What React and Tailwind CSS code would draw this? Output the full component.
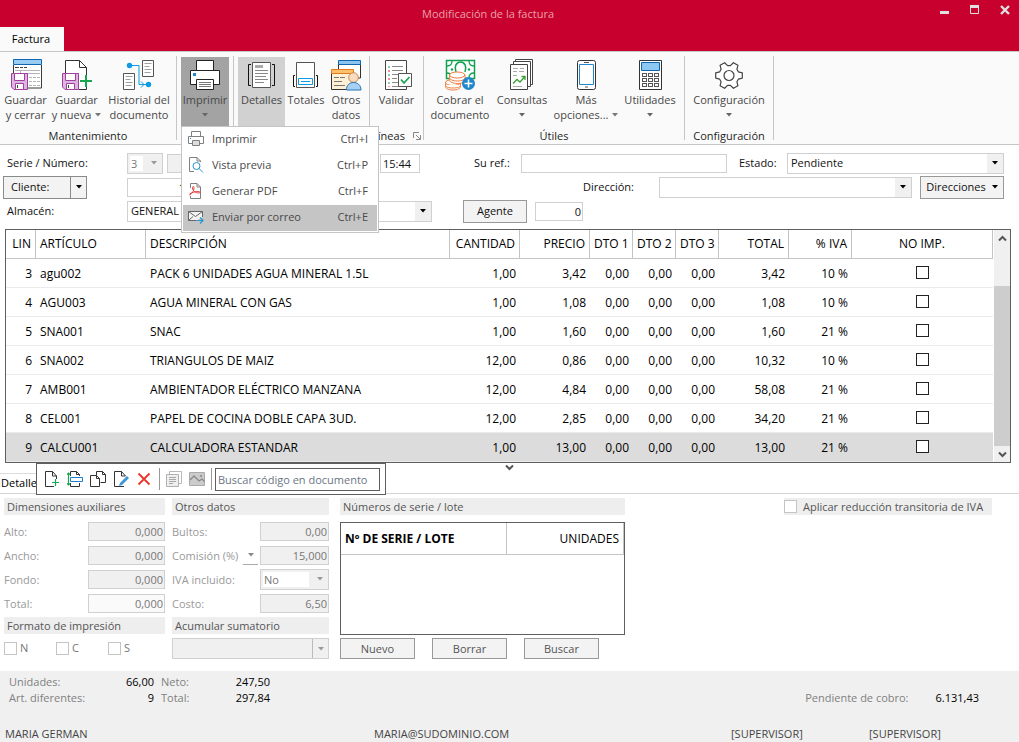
import clsx from "clsx";

/* ---------- small drawings ---------- */

function Caret({ className = "text-black" }) {
  return (
    <svg width="6" height="4" viewBox="0 0 6 4" className={clsx("shrink-0", className)} aria-hidden="true">
      <path d="M0 0h6L3 3.6z" fill="currentColor" />
    </svg>
  );
}

function Chevron({ up }) {
  return (
    <svg width="9" height="7" viewBox="0 0 9 7" aria-hidden="true">
      <path d={up ? "M1 5.5l3.5-3.5L8 5.5" : "M1 1.5l3.5 3.5L8 1.5"} fill="none" stroke="#555" strokeWidth="2" />
    </svg>
  );
}

function Svg({ children, size = 32 }) {
  return (
    <svg width={size} height={size} viewBox={`0 0 ${size} ${size}`} fill="none" className="block shrink-0" aria-hidden="true">
      {children}
    </svg>
  );
}

function Floppy() {
  return (
    <g stroke="#a0409f">
      <path d="M1.5 14.5h16v16H4l-2.500-2.500z" fill="#dcb6e0" />
      <path d="M4.500 14.500h10v7h-10z" fill="#fff" />
      <path d="M5.500 24.500h8v6h-8z" fill="#fff" />
      <path d="M7.500 26v3" stroke="#444" />
    </g>
  );
}

const SaveCloseIcon = () => (
  <Svg>
    <path d="M3.500 6v23h28V6" fill="#fff" stroke="#3b3b3b" />
    <path d="M3.500.500h28v5h-28z" fill="#9acbf0" stroke="#0f66b0" />
    <path d="M5 8.500h4M10 8.500h3M14 8.500h3" stroke="#444" />
    <path d="M5 11.500h25M10.500 12v3M11 14.500h19" stroke="#b5b5b5" />
    <path d="M19 18.500h3M23 18.500h3M27 18.500h3M19 22.500h3M23 22.500h3M27 22.500h3M19 26.500h3M23 26.500h3M27 26.500h3" stroke="#b5b5b5" />
    <Floppy />
  </Svg>
);

const SaveNewIcon = () => (
  <Svg>
    <path d="M4.500 14V1.500h14l7 7v21h-8" fill="#fff" />
    <path d="M4.500 14V1.500h14l7 7v9M25.500 27v3.500h-8" stroke="#333" />
    <path d="M18.500 1.500v7h7" stroke="#333" />
    <Floppy />
    <path d="M19 22h12M25 16v12" stroke="#19a653" strokeWidth="2" />
  </Svg>
);

const HistoryIcon = () => (
  <Svg>
    <path d="M19.500 1.500h11v16h-11z" fill="#fff" stroke="#555" />
    <path d="M21.500 4.500h7M21.500 7.500h5M21.500 10.500h7M21.500 13.500h6" stroke="#a0a0a0" />
    <path d="M.500 14.500h11v16H.500z" fill="#fff" stroke="#555" />
    <path d="M2.500 17.500h7M2.500 20.500h5M2.500 23.500h7M2.500 26.500h6" stroke="#a0a0a0" />
    <path d="M7 6.500h9v19h8" stroke="#0c9be4" />
    <path d="M18 22.500l3 3-3 3" stroke="#0c9be4" />
    <circle cx="6.500" cy="6.500" r="2.700" fill="#0c9be4" />
    <circle cx="25.500" cy="25.500" r="2.700" fill="#0c9be4" />
  </Svg>
);

const PrinterIcon = () => (
  <Svg>
    <path d="M7.500 11V1.500h17V11" fill="#fff" stroke="#222" />
    <path d="M1.500 11.500h29v14h-29z" fill="#fff" stroke="#222" />
    <path d="M4 14h3v3H4z" fill="#2187cc" />
    <path d="M7.500 20.500h17v10h-17z" fill="#fff" stroke="#222" />
    <path d="M10 23.500h12M10 25.500h12M10 27.500h12" stroke="#777" />
  </Svg>
);

const DetailIcon = () => (
  <Svg>
    <path d="M6.500 3.500h18v25h-18z" fill="#fff" stroke="#555" />
    <path d="M5 5.500H2.500v21H5M26 5.500h2.500v21H26" stroke="#111" />
    <path d="M9 6h8v3H9z" fill="#aaa" />
    <path d="M9 11.500h13M9 14.500h13M9 17.500h11M9 20.500h13M9 23.500h9" stroke="#888" />
  </Svg>
);

const TotalsIcon = () => (
  <Svg>
    <path d="M6.500 3.500h18v25h-18z" fill="#fff" stroke="#555" />
    <path d="M5 16.500H3.500v11H5M26 16.500h1.500v11H26" stroke="#111" />
    <path d="M8.500 19.500h14v6h-14z" fill="#fff" stroke="#0c9be4" />
    <path d="M11 22.500h9" stroke="#0c9be4" />
  </Svg>
);

const OtherDataIcon = () => (
  <Svg>
    <path d="M8.500 5v14h22V5" fill="#fff" stroke="#333" />
    <path d="M8.500 1.500h22v4h-22z" fill="#8cc4ee" stroke="#0f66b0" />
    <path d="M1.500 14v16.500h21V14" fill="#fdf0d4" stroke="#333" />
    <path d="M1.500 10.500h22v4h-22z" fill="#fbc26b" stroke="#e07a1d" />
    <path d="M4 18.500h5M10 18.500h5M4 22.500h8M4 26.500h11" stroke="#777" />
    <circle cx="23.500" cy="18.500" r="4.800" fill="#f9dcc0" stroke="#c98753" />
    <path d="M16.500 31c0-5 3-7.500 7-7.500s7.500 2.500 7.500 7.500z" fill="#a8d0f2" stroke="#2474b8" />
  </Svg>
);

const ValidateIcon = () => (
  <Svg>
    <path d="M4.500 1.500h21v29h-21z" fill="#fff" stroke="#444" />
    <path d="M11 7.500h11M11 11.500h11M11 15.500h7M11 19.500h5M11 23.500h6M11 27.500h11" stroke="#888" />
    <path d="M8 7v2M8 15v2M8 23v2" stroke="#19a653" />
    <path d="M8 11v2M8 19v2M8 27v1" stroke="#d22" />
    <path d="M17.500 14.500h13v13h-13z" fill="#fff" stroke="#555" />
    <path d="M20 20.500l3 3.500 5.500-6" stroke="#19a653" strokeWidth="1.800" />
  </Svg>
);

const CashIcon = () => (
  <Svg>
    <path d="M2.500 1.500h28v18h-28z" fill="#fff" stroke="#12a150" strokeWidth="1.500" />
    <path d="M3 7c3 0 5-2 5-5M30 7c-3 0-5-2-5-5M30 14c-3 0-5 2-5 5M3 14c2 0 4 1 5 3" stroke="#12a150" strokeWidth="1.300" />
    <path d="M12 13c-2-5 0-10 4.500-10S23 8 21 13" stroke="#12a150" strokeWidth="1.500" />
    <circle cx="8" cy="10.500" r="1.200" fill="#12a150" />
    <circle cx="25" cy="10.500" r="1.200" fill="#12a150" />
    <g fill="#fff" stroke="#ee7d3c">
      <path d="M1.500 23.500v4c0 2 3 3.500 7.500 3.500s7.500-1.500 7.500-3.500v-4z" />
      <ellipse cx="9" cy="23.500" rx="7.500" ry="3" />
      <path d="M1.500 26c0 2 3 3 7.500 3s7.500-1 7.500-3" />
      <path d="M5.500 16v5c0 2 3.500 3.500 8 3.500s7.500-1.500 7.500-3.500v-5z" />
      <path d="M5.500 18.500c0 2 3.500 3.500 8 3.500s7.500-1.500 7.500-3.500" />
      <ellipse cx="13.200" cy="16" rx="7.700" ry="3" />
    </g>
    <circle cx="24.500" cy="24.500" r="6.500" fill="#2187cc" />
    <path d="M20.500 24.500h8M24.500 20.500v8" stroke="#fff" strokeWidth="1.500" />
  </Svg>
);

const QueriesIcon = () => (
  <Svg>
    <path d="M9.500.500h17v25h-17z" fill="#fff" stroke="#444" />
    <path d="M7.500 2.500h17v25h-17z" fill="#fff" stroke="#444" />
    <path d="M4.500 5.500h17v25h-17z" fill="#fff" stroke="#444" />
    <path d="M7 9.500h5M14 9.500h4M7 12.500h4M13 12.500h5M7 16.500h4M7 27.500h9" stroke="#aaa" />
    <path d="M7 24.500l4-4 3 2.500 4.500-5M15.500 17.500h3.500v3.500" stroke="#3aa335" strokeWidth="1.300" />
  </Svg>
);

const PhoneIcon = () => (
  <Svg>
    <rect x="7.500" y="1.500" width="18" height="29" rx="2" fill="#fff" stroke="#333" />
    <path d="M9.500 5.500h14v20h-14z" fill="#fff" stroke="#2187cc" />
    <path d="M14 3.500h5M15 28h3" stroke="#555" />
  </Svg>
);

const CalculatorIcon = () => (
  <Svg>
    <path d="M5.500 1.500h22v29h-22z" fill="#fff" stroke="#333" />
    <path d="M7.500 3.500h18v8h-18z" fill="#8cc8f2" stroke="#0f66b0" />
    {[14.5, 19.5, 24.5].map((y) =>
      [8.5, 14.5, 20.5].map((x) => (
        <rect key={`${x}-${y}`} x={x} y={y} width="4" height="3" fill="#fff" stroke="#555" />
      ))
    )}
  </Svg>
);

// six teeth, four corners each
const gearPoints = [0, 60, 120, 180, 240, 300]
  .flatMap((a) => [
    [a - 22, 10],
    [a - 11, 13.5],
    [a + 11, 13.5],
    [a + 22, 10],
  ])
  .map(([a, r]) => {
    const rad = (a * Math.PI) / 180;
    return `${(16 + r * Math.cos(rad)).toFixed(1)},${(16.5 + r * Math.sin(rad)).toFixed(1)}`;
  })
  .join(" ");

const GearIcon = () => (
  <Svg>
    <polygon points={gearPoints} fill="#fff" stroke="#444" strokeWidth="1.200" strokeLinejoin="round" />
    <circle cx="16" cy="16.500" r="5" fill="#fff" stroke="#444" strokeWidth="1.200" />
  </Svg>
);

const MenuPrintIcon = () => (
  <Svg size={16}>
    <path d="M3.500 5V.500h9V5M.500 5.500h15v7H.500z" fill="#fff" stroke="#808080" />
    <path d="M4.500 9.500h7v5h-7z" fill="#ddd" stroke="#808080" />
    <path d="M2 7h1v1H2z" fill="#2187cc" />
  </Svg>
);

const MenuPreviewIcon = () => (
  <Svg size={16}>
    <path d="M9 .500H1.500v14H6M9 .500L12.500 4v1M9 .500V4h3.500" stroke="#808080" />
    <circle cx="8.500" cy="9" r="3.500" fill="#fff" stroke="#2b93d1" />
    <path d="M11 11.500l4 4" stroke="#2b93d1" />
  </Svg>
);

const MenuPdfIcon = () => (
  <Svg size={16}>
    <path d="M2.500 5V.500H9L12.500 4v11.500h-10V13M9 .500V4h3.500" stroke="#808080" />
    <path d="M1.500 12C3 12 6 8 6 5c0-2-1.500-2-1.500 0 0 2.500 3 5 6.500 5 1.500 0 1.500-1.500-.500-1.500C7.500 8.500 3.500 9.500 1.500 11" stroke="#e03c3c" />
  </Svg>
);

const MenuMailIcon = () => (
  <Svg size={16}>
    <path d="M14.500 8V2.500H.500v9h8" fill="#f4f4f4" stroke="#666" />
    <path d="M.500 2.500l7 5 7-5M.500 11.500L5 7.500" stroke="#666" />
    <path d="M8.500 11.500h6M12 8.500l3 3-3 3" stroke="#2b93d1" strokeWidth="1.200" />
  </Svg>
);

const NewLineIcon = () => (
  <Svg size={16}>
    <path d="M10 15.500H1.500V.500h7L12.500 5v3M8.500.500V5h4" stroke="#333" />
    <path d="M8 11.500h7M11.500 8v7" stroke="#19a653" strokeWidth="1.200" />
  </Svg>
);

const InsertLineIcon = () => (
  <Svg size={16}>
    <path d="M3.500 5V.500h6l3 3V5M3.500 12v3.500h9V12M9.500.500v3h3" stroke="#333" />
    <path d="M3.500 6.500h12v4h-12z" fill="#fff" stroke="#1d7fd1" />
    <path d="M1.500 2v12M0 3.500L1.500 2 3 3.500M0 12.500L1.500 14 3 12.500" stroke="#19a653" strokeWidth="1.200" />
  </Svg>
);

const CopyIcon = () => (
  <Svg size={16}>
    <path d="M6.500 4V.500h6l3 3v8h-5M12.500.500v3h3" stroke="#333" />
    <path d="M.500 4.500h6l3 3v8h-9zM6.500 4.500v3h3" fill="#fff" stroke="#333" />
  </Svg>
);

const EditIcon = () => (
  <Svg size={16}>
    <path d="M11 15.500H1.500V.500h7L12.500 5M8.500.500V5h4" stroke="#333" />
    <path d="M6 15l1-3 7-7 2 2-7 7z" fill="#3d96d8" />
  </Svg>
);

const DeleteIcon = () => (
  <Svg size={16}>
    <path d="M2.500 2.500l11 11M13.500 2.500l-11 11" stroke="#e93c31" strokeWidth="2" />
  </Svg>
);

const NotesIcon = () => (
  <Svg size={16}>
    <path d="M3.500 3V.500h12v12H13" stroke="#b8b8b8" />
    <path d="M.500 3.500h12v12H.500z" fill="#eee" stroke="#b0b0b0" />
    <path d="M3 6.500h7M3 8.500h7M3 10.500h7M3 12.500h4" stroke="#a8a8a8" />
  </Svg>
);

const PictureIcon = () => (
  <Svg size={16}>
    <path d="M.500 1.500h15v13H.500z" fill="#ccc" stroke="#aaa" />
    <path d="M1 9l4-4 5 5 3-2 2.500 2.500" stroke="#888" strokeWidth="1.300" />
    <circle cx="12" cy="5" r="1.300" fill="#999" />
  </Svg>
);

/* ---------- ribbon ---------- */

function RibbonButton({ icon, lines, className, caret, inlineCaret }) {
  return (
    <button type="button" className={clsx("flex h-[69px] flex-col items-center pt-[2px] leading-[15px] text-[#484848]", className)}>
      <span className="mb-px">{icon}</span>
      <span className="whitespace-nowrap">{lines[0]}</span>
      {lines[1] && (
        <span className="flex items-center gap-1 whitespace-nowrap">
          {lines[1]}
          {inlineCaret && <Caret className="text-[#777]" />}
        </span>
      )}
      {caret && (
        <span className="flex h-[15px] items-center">
          <Caret className="text-[#666]" />
        </span>
      )}
    </button>
  );
}

function RibbonGroup({ label, children, className, launcher }) {
  return (
    <section className={clsx("my-1 flex flex-col border-r border-[#c6c6c6] pt-px", className)}>
      <div className="flex justify-center">{children}</div>
      <div className="flex h-4 items-center justify-center gap-2 pt-1 text-[#1f1f1f]">
        {label}
        {launcher && (
          <svg width="8" height="8" viewBox="0 0 8 8" fill="none" stroke="#888" aria-hidden="true">
            <path d="M.500 6V.500H6M3 3l4 4M7.500 3v4.500H3" />
          </svg>
        )}
      </div>
    </section>
  );
}

const printMenu = [
  { label: "Imprimir", keys: "Ctrl+I", icon: <MenuPrintIcon /> },
  { label: "Vista previa", keys: "Ctrl+P", icon: <MenuPreviewIcon /> },
  { label: "Generar PDF", keys: "Ctrl+F", icon: <MenuPdfIcon /> },
  { label: "Enviar por correo", keys: "Ctrl+E", icon: <MenuMailIcon />, active: true },
];

function PrintMenu() {
  return (
    <div role="menu" className="absolute top-full left-0 z-10 w-[198px] border border-[#c4c4c4] bg-white p-px pt-0 text-[#4a4a4a]">
      {printMenu.map((item) => (
        <button
          key={item.label}
          type="button"
          role="menuitem"
          className={clsx("flex h-[26px] w-full items-center gap-2 pr-[9px] pb-[2px] pl-[5px]", item.active && "bg-[#c5c5c5]")}
        >
          {item.icon}
          <span>{item.label}</span>
          <span className="ml-auto">{item.keys}</span>
        </button>
      ))}
    </div>
  );
}

function Ribbon() {
  return (
    <div className="flex h-[94px] border-y border-[#c6c6c6] bg-[#fafafa]">
      <RibbonGroup label="Mantenimiento" className="w-[177px]">
        <RibbonButton icon={<SaveCloseIcon />} lines={["Guardar", "y cerrar"]} className="w-[51px]" />
        <RibbonButton icon={<SaveNewIcon />} lines={["Guardar", "y nueva"]} className="w-[51px]" inlineCaret />
        <RibbonButton icon={<HistoryIcon />} lines={["Historial del", "documento"]} className="w-[74px]" />
      </RibbonGroup>
      <RibbonGroup className="w-[57px]">
        <div className="relative">
          <RibbonButton icon={<PrinterIcon />} lines={["Imprimir"]} className="w-[48px] bg-[#a3a3a3]" caret />
          <PrintMenu />
        </div>
      </RibbonGroup>
      <RibbonGroup className="w-[136px]">
        <RibbonButton icon={<DetailIcon />} lines={["Detalles"]} className="w-[47px] bg-[#d1d1d1]" />
        <RibbonButton icon={<TotalsIcon />} lines={["Totales"]} className="w-[42px]" />
        <RibbonButton icon={<OtherDataIcon />} lines={["Otros", "datos"]} className="w-[38px]" />
      </RibbonGroup>
      <RibbonGroup label="Líneas" className="w-[54px]" launcher>
        <RibbonButton icon={<ValidateIcon />} lines={["Validar"]} className="w-[48px]" />
      </RibbonGroup>
      <RibbonGroup label="Útiles" className="w-[261px]">
        <RibbonButton icon={<CashIcon />} lines={["Cobrar el", "documento"]} className="w-[64px]" />
        <RibbonButton icon={<QueriesIcon />} lines={["Consultas"]} className="w-[60px]" caret />
        <RibbonButton icon={<PhoneIcon />} lines={["Más", "opciones..."]} className="w-[68px]" inlineCaret />
        <RibbonButton icon={<CalculatorIcon />} lines={["Utilidades"]} className="w-[60px]" caret />
      </RibbonGroup>
      <RibbonGroup label="Configuración" className="w-[89px]">
        <RibbonButton icon={<GearIcon />} lines={["Configuración"]} className="w-[80px]" caret />
      </RibbonGroup>
    </div>
  );
}

/* ---------- header form ---------- */

function SelectBox({ id, label, value, className, disabled, buttonClass }) {
  return (
    <div className={clsx("relative flex h-[21px] items-center border border-[#d0d0d0]", disabled ? "bg-[#f0f0f0] text-[#777]" : "bg-white", className)}>
      <select
        id={id}
        aria-label={label}
        disabled={disabled}
        className={clsx(
          "block appearance-none outline-none",
          disabled && value ? "ml-[2px] mr-[19px] h-[15px] min-w-0 flex-1 bg-white pl-px" : "h-full w-full pl-[3px]"
        )}
      >
        <option>{value}</option>
      </select>
      <span
        className={clsx(
          "pointer-events-none absolute inset-y-0 right-0 flex w-4 items-center justify-center",
          buttonClass || "bg-[#f0f0f0]"
        )}
      >
        <Caret className={disabled ? "text-[#999]" : "text-black"} />
      </span>
    </div>
  );
}

const fieldClass = "h-[19px] border border-[#d0d0d0] outline-none";

function HeaderForm() {
  return (
    <div className="pt-[6px] pr-[15px] pb-[6px] text-[#111]">
      <div className="flex h-6 items-center pl-[7px]">
        <label htmlFor="serie" className="w-[120px]">Serie / Número:</label>
        <SelectBox id="serie" value="3" disabled className="w-[36px]" />
        <input aria-label="Número" className={clsx(fieldClass, "ml-1 w-[210px] bg-[#f0f0f0] px-[3px]")} />
        <input aria-label="Hora" defaultValue="15:44" className={clsx(fieldClass, "ml-[3px] w-[40px] pl-[2px]")} />
        <label htmlFor="ref" className="ml-[54px] w-[47px]">Su ref.:</label>
        <input id="ref" className={clsx(fieldClass, "w-[206px] px-[3px]")} />
        <label htmlFor="estado" className="ml-3 w-[48px]">Estado:</label>
        <SelectBox id="estado" value="Pendiente" className="flex-1" />
      </div>
      <div className="flex h-6 items-center pl-[3px]">
        <div className="flex h-[23px] w-[84px] border border-[#8a8a8a] bg-[#f3f3f3]">
          <button type="button" className="flex-1 pl-[7px] text-left">Cliente:</button>
          <button type="button" aria-label="Opciones de cliente" className="flex w-4 items-center justify-center border-l border-[#8a8a8a]">
            <Caret />
          </button>
        </div>
        <input aria-label="Cliente" defaultValue="1" className={clsx(fieldClass, "ml-10 w-[60px] pr-px text-right")} />
        <label htmlFor="direccion" className="ml-[396px] w-[76px]">Dirección:</label>
        <SelectBox id="direccion" value="" className="flex-1" />
        <button type="button" className="ml-2 flex h-[23px] w-[84px] items-center justify-center gap-[6px] border border-[#999] bg-[#f3f3f3]">
          Direcciones
          <Caret />
        </button>
      </div>
      <div className="flex h-6 items-center pl-[7px]">
        <label htmlFor="almacen" className="w-[120px]">Almacén:</label>
        <SelectBox id="almacen" value="GENERAL" className="w-[305px]" />
        <button type="button" className="ml-[31px] h-[23px] w-[64px] border border-[#999] bg-[#f3f3f3]">Agente</button>
        <input aria-label="Agente" defaultValue="0" className={clsx(fieldClass, "ml-2 w-[48px] px-px text-right")} />
      </div>
    </div>
  );
}

/* ---------- invoice lines ---------- */

const columns = [
  { name: "LIN", width: "w-[30px]", align: "text-right" },
  { name: "ARTÍCULO", width: "w-[110px]", align: "text-left" },
  { name: "DESCRIPCIÓN", width: "w-[304px]", align: "text-left" },
  { name: "CANTIDAD", width: "w-[70px]", align: "text-right" },
  { name: "PRECIO", width: "w-[70px]", align: "text-right" },
  { name: "DTO 1", width: "w-[43px]", align: "text-right" },
  { name: "DTO 2", width: "w-[43px]", align: "text-right" },
  { name: "DTO 3", width: "w-[43px]", align: "text-right" },
  { name: "TOTAL", width: "w-[70px]", align: "text-right" },
  { name: "% IVA", width: "w-[63px]", align: "text-right" },
  { name: "NO IMP.", width: "", align: "text-center" },
];

const lines = [
  ["3", "agu002", "PACK 6 UNIDADES AGUA MINERAL 1.5L", "1,00", "3,42", "0,00", "0,00", "0,00", "3,42", "10 %"],
  ["4", "AGU003", "AGUA MINERAL CON GAS", "1,00", "1,08", "0,00", "0,00", "0,00", "1,08", "10 %"],
  ["5", "SNA001", "SNAC", "1,00", "1,60", "0,00", "0,00", "0,00", "1,60", "21 %"],
  ["6", "SNA002", "TRIANGULOS DE MAIZ", "12,00", "0,86", "0,00", "0,00", "0,00", "10,32", "10 %"],
  ["7", "AMB001", "AMBIENTADOR ELÉCTRICO MANZANA", "12,00", "4,84", "0,00", "0,00", "0,00", "58,08", "21 %"],
  ["8", "CEL001", "PAPEL DE COCINA DOBLE CAPA 3UD.", "12,00", "2,85", "0,00", "0,00", "0,00", "34,20", "21 %"],
  ["9", "CALCU001", "CALCULADORA ESTANDAR", "1,00", "13,00", "0,00", "0,00", "0,00", "13,00", "21 %"],
];

function LinesTable() {
  return (
    <div className="mr-2 ml-[5px] flex border border-[#5f5f5f] bg-white">
      <div className="min-w-0 flex-1 pr-px">
        <table className="w-full table-fixed border-separate border-spacing-0 text-[12px] leading-4 text-black">
          <thead>
            <tr>
              {columns.map((c) => (
                <th
                  key={c.name}
                  scope="col"
                  className={clsx("h-[29px] border-r border-b border-[#c4c4c4] px-1 font-normal whitespace-nowrap", c.width, c.align)}
                >
                  {c.name}
                </th>
              ))}
            </tr>
          </thead>
          <tbody>
            {lines.map((row) => (
              <tr key={row[0]} className={row[0] === "9" ? "bg-[#dcdcdc]" : "bg-white"}>
                {row.map((cell, i) => (
                  <td
                    key={columns[i].name}
                    className={clsx("h-[29px] border-b border-[#ebebeb] px-1 pt-[2px] whitespace-nowrap", columns[i].align)}
                  >
                    {cell}
                  </td>
                ))}
                <td className="h-[29px] border-b border-[#ebebeb] px-1 pb-[2px]">
                  <input
                    type="checkbox"
                    aria-label={`No imprimir línea ${row[0]}`}
                    className="mx-auto block size-[13px] appearance-none border border-[#222] bg-white"
                  />
                </td>
              </tr>
            ))}
          </tbody>
        </table>
      </div>
      <div className="flex w-4 flex-col items-center bg-[#f0f0f0]">
        <div className="flex h-4 items-center"><Chevron up /></div>
        <div className="mt-10 w-full flex-1 bg-[#cdcdcd]" />
        <div className="flex h-4 items-center"><Chevron /></div>
      </div>
    </div>
  );
}

/* ---------- detail area ---------- */

const lineTools = [
  { name: "Nueva línea", icon: <NewLineIcon /> },
  { name: "Insertar línea", icon: <InsertLineIcon /> },
  { name: "Duplicar línea", icon: <CopyIcon /> },
  { name: "Modificar línea", icon: <EditIcon /> },
  { name: "Eliminar línea", icon: <DeleteIcon /> },
];

function LineToolbar() {
  return (
    <div className="relative flex h-[31px] border-b border-[#d4d4d4]">
      <div className="mt-[10px] w-9 overflow-hidden border-t border-[#dcdcdc] pt-px pl-px whitespace-nowrap text-black">Detalle</div>
      <div className="flex h-8 w-[350px] items-center border border-[#5f5f5f] bg-white pl-[7px]">
        <div className="flex gap-[7px]">
          {lineTools.map((t) => (
            <button key={t.name} type="button" aria-label={t.name}>{t.icon}</button>
          ))}
        </div>
        <div className="ml-[7px] flex h-[22px] items-center gap-[7px] border-x border-[#999] px-[6px]">
          <button type="button" aria-label="Notas" disabled><NotesIcon /></button>
          <button type="button" aria-label="Imagen" disabled><PictureIcon /></button>
        </div>
        <input
          aria-label="Buscar código en documento"
          placeholder="Buscar código en documento"
          className="mr-[5px] ml-[3px] h-[23px] min-w-0 flex-1 border border-[#5f5f5f] px-[2px] outline-none placeholder:text-[#6b7684]"
        />
      </div>
      <span className="absolute inset-x-0 top-px mx-auto flex w-[9px]"><Chevron /></span>
    </div>
  );
}

function Heading({ children }) {
  return <h2 className="h-[17px] bg-[#eee] pl-[3px] leading-[17px] text-[#555]">{children}</h2>;
}

function Field({ id, label, value, inputClass, children }) {
  return (
    <div className="flex h-6 items-center">
      <label htmlFor={id} className="flex-1 pt-[2px] whitespace-nowrap text-[#999]">{label}</label>
      {children || (
        <input id={id} defaultValue={value} readOnly className={clsx(fieldClass, "px-px text-right text-[#777]", inputClass)} />
      )}
    </div>
  );
}

function DetailPanel() {
  return (
    <div className="flex flex-1 items-start pt-1 pr-[27px] pb-[9px] pl-1">
      <div className="w-[161px]">
        <Heading>Dimensiones auxiliares</Heading>
        <div className="pt-1 pb-[2px]">
          <Field id="alto" label="Alto:" value="0,000" inputClass="w-[77px] bg-[#f0f0f0]" />
          <Field id="ancho" label="Ancho:" value="0,000" inputClass="w-[77px] bg-[#f0f0f0]" />
          <Field id="fondo" label="Fondo:" value="0,000" inputClass="w-[77px] bg-[#f0f0f0]" />
          <Field id="total" label="Total:" value="0,000" inputClass="w-[77px] bg-[#fafafa]" />
        </div>
        <Heading>Formato de impresión</Heading>
        <div className="flex h-7 items-center">
          {["N", "C", "S"].map((f) => (
            <label key={f} className="flex w-[52px] items-center gap-[3px] text-[#777]">
              <input type="checkbox" className="size-[13px] appearance-none border border-[#c4c4c4] bg-white" />
              {f}
            </label>
          ))}
        </div>
      </div>

      <div className="ml-[7px] w-[157px]">
        <Heading>Otros datos</Heading>
        <div className="pt-1 pb-[2px]">
          <Field id="bultos" label="Bultos:" value="0,00" inputClass="w-[69px] bg-[#f0f0f0]" />
          <Field id="comision" label="Comisión (%)">
            <button type="button" aria-label="Tipo de comisión" className="mr-[2px] flex h-[19px] w-[15px] items-center justify-center border-b border-[#aaa]">
              <Caret className="text-[#888]" />
            </button>
            <input id="comision" defaultValue="15,000" readOnly className={clsx(fieldClass, "w-[69px] bg-[#f0f0f0] px-px text-right text-[#777]")} />
          </Field>
          <Field id="iva" label="IVA incluido:">
            <SelectBox id="iva" value="No" disabled className="w-[69px]" />
          </Field>
          <Field id="costo" label="Costo:" value="6,50" inputClass="w-[69px] bg-[#f0f0f0]" />
        </div>
        <Heading>Acumular sumatorio</Heading>
        <SelectBox label="Acumular sumatorio" value="" disabled className="mt-1" buttonClass="border-l border-[#bbb]" />
      </div>

      <div className="ml-[11px] w-[285px]">
        <Heading>Números de serie / lote</Heading>
        <div className="mt-[7px] h-[113px] border border-[#5f5f5f] bg-white">
          <table className="w-full border-separate border-spacing-0 text-[12px] text-black">
            <thead>
              <tr>
                <th scope="col" className="h-8 w-[166px] border-r border-b border-[#c4c4c4] px-1 text-left font-bold">Nº DE SERIE / LOTE</th>
                <th scope="col" className="h-8 border-r border-b border-[#c4c4c4] px-1 text-right font-normal">UNIDADES</th>
              </tr>
            </thead>
          </table>
        </div>
        <div className="mt-[3px] flex gap-[17px]">
          {["Nuevo", "Borrar", "Buscar"].map((b) => (
            <button key={b} type="button" className="h-[21px] w-[75px] border border-[#999] bg-[#f3f3f3] text-[#555]">{b}</button>
          ))}
        </div>
      </div>

      <label className="ml-auto flex h-[17px] w-[208px] items-center gap-[6px] bg-[#eee] text-[#555]">
        <input type="checkbox" className="size-[13px] appearance-none border border-[#c4c4c4] bg-white" />
        Aplicar reducción transitoria de IVA
      </label>
    </div>
  );
}

/* ---------- footer ---------- */

function Footer() {
  return (
    <footer className="bg-[#f0f0f0] pt-[3px] text-[#808080]">
      <div className="flex items-end pr-10 pl-[9px] leading-4">
        <dl className="grid grid-cols-[85px_60px_60px_56px]">
          <dt>Unidades:</dt>
          <dd className="text-right text-black">66,00</dd>
          <dt className="pl-[7px]">Neto:</dt>
          <dd className="text-right text-black">247,50</dd>
          <dt className="whitespace-nowrap">Art. diferentes:</dt>
          <dd className="text-right text-black">9</dd>
          <dt className="pl-[7px]">Total:</dt>
          <dd className="text-right text-black">297,84</dd>
        </dl>
        <p className="ml-auto flex gap-[27px]">
          Pendiente de cobro: <span className="text-black">6.131,43</span>
        </p>
      </div>
      <div className="mt-5 flex h-4 items-center pl-[5px] text-[#444]">
        <span className="w-[369px]">MARIA GERMAN</span>
        <span className="flex-1">MARIA@SUDOMINIO.COM</span>
        <span className="w-[138px]">[SUPERVISOR]</span>
        <span className="w-[150px]">[SUPERVISOR]</span>
      </div>
    </footer>
  );
}

export default function App() {
  return (
    <div className="flex min-h-screen flex-col bg-white font-['Open_Sans','Noto_Sans',sans-serif] text-[11px] leading-4">
      <header className="bg-[#c8002d]">
        <div className="flex h-[27px] items-center">
          <h1 className="flex-1 pl-10 text-center text-[#e8a0a8]">Modificación de la factura</h1>
          <div className="flex w-[83px] items-center gap-5 pb-2 pl-1">
            <button type="button" aria-label="Minimizar">
              <svg width="10" height="9" viewBox="0 0 10 9"><path d="M0 6h9v3H0z" fill="#e0e0e0" /></svg>
            </button>
            <button type="button" aria-label="Maximizar">
              <svg width="10" height="9" viewBox="0 0 10 9">
                <path d="M.500.500h8v8h-8z" fill="none" stroke="#e0e0e0" />
                <path d="M0 0h9v3H0z" fill="#e0e0e0" />
              </svg>
            </button>
            <button type="button" aria-label="Cerrar">
              <svg width="10" height="10" viewBox="0 0 10 10"><path d="M1 1l8 8M9 1L1 9" stroke="#e0e0e0" strokeWidth="2.400" /></svg>
            </button>
          </div>
        </div>
        <button type="button" className="h-6 w-16 bg-[#fafafa] pr-[2px] text-black">Factura</button>
      </header>
      <Ribbon />
      <HeaderForm />
      <LinesTable />
      <LineToolbar />
      <DetailPanel />
      <Footer />
    </div>
  );
}
